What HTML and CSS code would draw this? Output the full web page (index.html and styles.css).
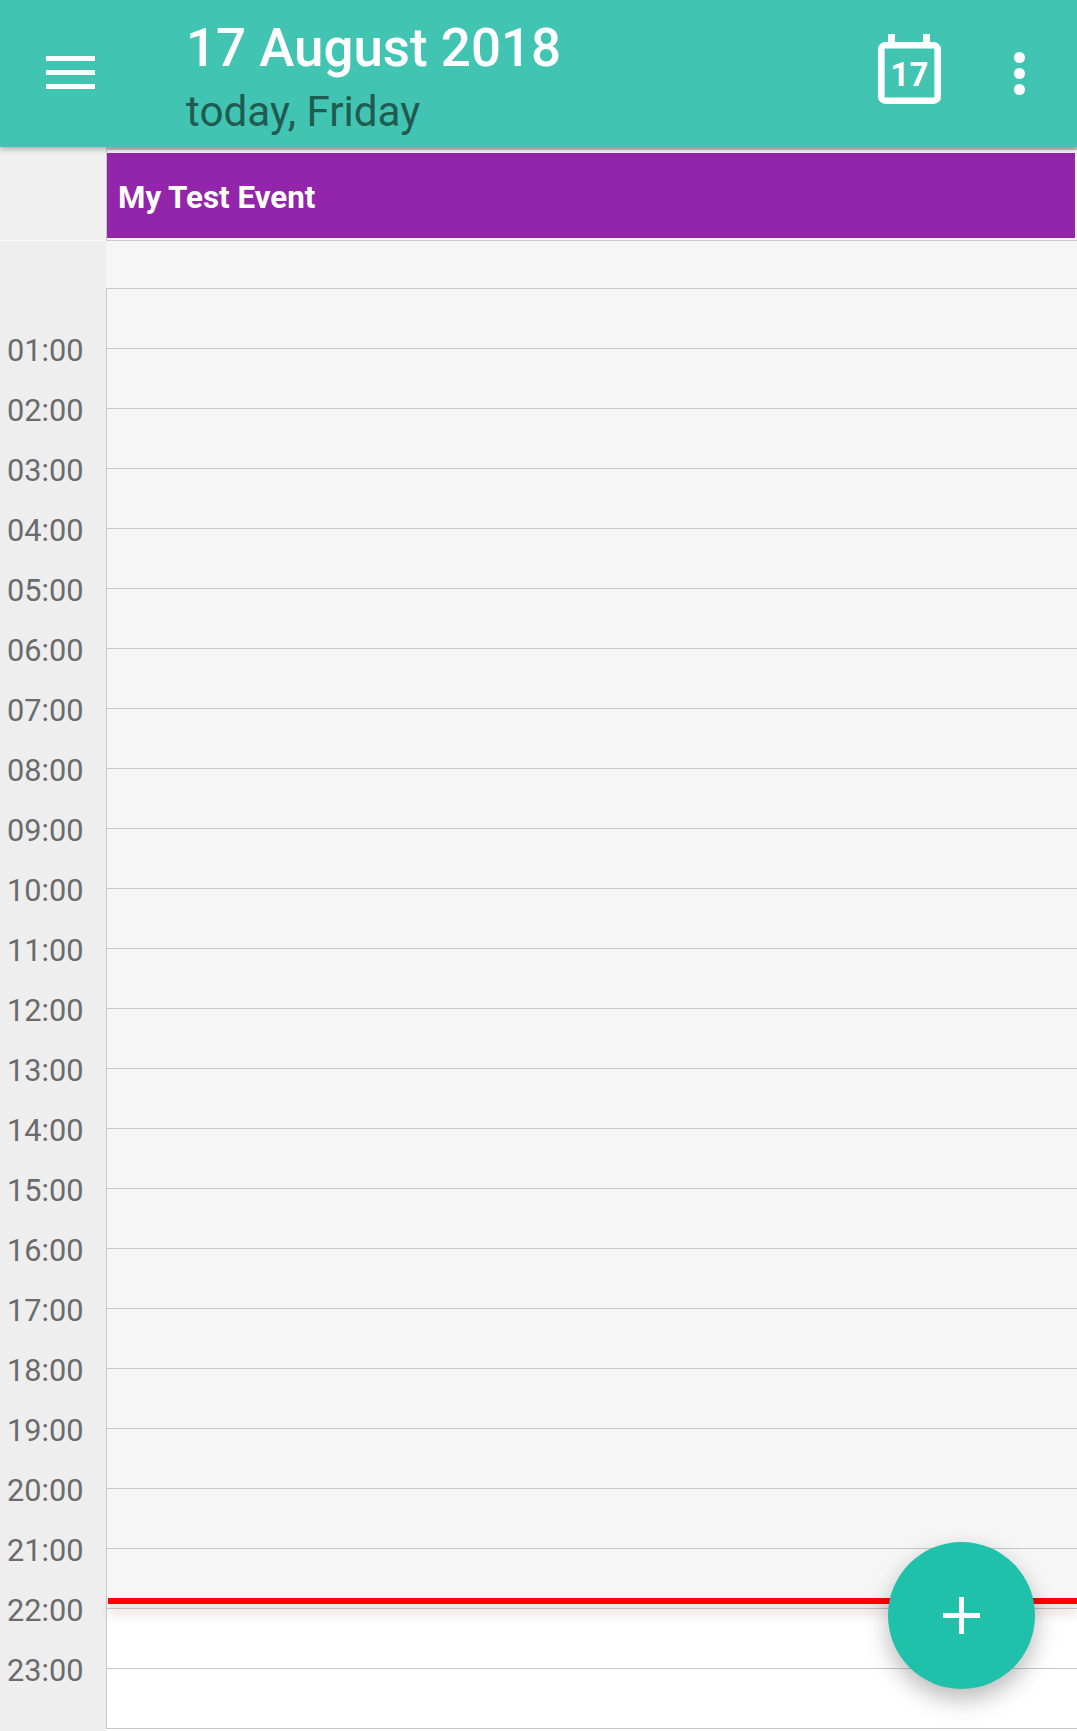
FILE: index.html
```html
<!DOCTYPE html>
<html lang="en">
<head>
  <meta charset="UTF-8" />
  <title>Calendar</title>
  <link rel="stylesheet" href="styles.css">
</head>
<body>
  <div class="toolbar">
    <div class="menu-icon"><span></span><span></span><span></span></div>
    <div class="titles">
      <div class="title">17 August 2018</div>
      <div class="subtitle">today, Friday</div>
    </div>
    <svg class="today-icon" width="63" height="70" viewBox="0 0 63 70">
      <rect x="10" y="0" width="7" height="12" fill="#fff" />
      <rect x="45" y="0" width="7" height="12" fill="#fff" />
      <rect x="3.3" y="11.3" width="56.4" height="55.4" rx="4" fill="none" stroke="#fff" stroke-width="6.6" />
      <text x="31.5" y="52" text-anchor="middle" class="today-num">17</text>
    </svg>
    <div class="more-icon"><span></span><span></span><span></span></div>
  </div>

  <!-- All day -->
  <div class="allday">
    <div class="allday-gutter"></div>
    <div class="allday-events">
      <div class="event">My Test Event</div>
    </div>
  </div>

  <!-- Day -->
  <div class="day">
    <div class="hours">
      <div class="hour">01:00</div>
      <div class="hour">02:00</div>
      <div class="hour">03:00</div>
      <div class="hour">04:00</div>
      <div class="hour">05:00</div>
      <div class="hour">06:00</div>
      <div class="hour">07:00</div>
      <div class="hour">08:00</div>
      <div class="hour">09:00</div>
      <div class="hour">10:00</div>
      <div class="hour">11:00</div>
      <div class="hour">12:00</div>
      <div class="hour">13:00</div>
      <div class="hour">14:00</div>
      <div class="hour">15:00</div>
      <div class="hour">16:00</div>
      <div class="hour">17:00</div>
      <div class="hour">18:00</div>
      <div class="hour">19:00</div>
      <div class="hour">20:00</div>
      <div class="hour">21:00</div>
      <div class="hour">22:00</div>
      <div class="hour">23:00</div>
    </div>
    <div class="slots">
      <div class="slot-top"></div>
      <div class="slot past"></div>
      <div class="slot past"></div>
      <div class="slot past"></div>
      <div class="slot past"></div>
      <div class="slot past"></div>
      <div class="slot past"></div>
      <div class="slot past"></div>
      <div class="slot past"></div>
      <div class="slot past"></div>
      <div class="slot past"></div>
      <div class="slot past"></div>
      <div class="slot past"></div>
      <div class="slot past"></div>
      <div class="slot past"></div>
      <div class="slot past"></div>
      <div class="slot past"></div>
      <div class="slot past"></div>
      <div class="slot past"></div>
      <div class="slot past"></div>
      <div class="slot past"></div>
      <div class="slot past"></div>
      <div class="slot past"></div>
      <div class="slot"></div>
      <div class="slot"></div>
      <div class="now-line"></div>
    </div>
  </div>

  <div class="fab">
    <svg width="37" height="37" viewBox="0 0 37 37">
      <path d="M16 0h5v16h16v5H21v16h-5V21H0v-5h16z" fill="#fff" />
    </svg>
  </div>
</body>
</html>
```

FILE: styles.css
```css
html, body { margin: 0; height: 1731px; overflow: hidden; }
body { position: relative; font-family: Roboto, sans-serif; background: #fff; }

/* Toolbar */
.toolbar {
  position: relative;
  z-index: 2;
  display: flex;
  align-items: flex-start;
  height: 147px;
  background: #42c4b2;
  box-shadow: 0 2px 6px rgba(0, 0, 0, 0.3);
}
.menu-icon {
  display: flex;
  flex-direction: column;
  gap: 9px;
  width: 49px;
  margin: 56px 0 0 46px;
}
.menu-icon span { display: block; height: 5px; background: #fff; }
.titles { margin-left: 91px; width: 692px; }
.title { color: #fff; font-size: 52.9px; font-weight: 500; line-height: 62px; margin-top: 17px; }
.subtitle { color: #1f5b50; font-size: 42.2px; line-height: 48px; margin-top: 9px; }
.today-icon { margin-top: 34px; flex: none; }
.today-num { fill: #fff; font-family: Roboto, sans-serif; font-size: 33px; font-weight: 700; }
.more-icon {
  display: flex;
  flex-direction: column;
  gap: 5px;
  margin: 52px 0 0 73px;
}
.more-icon span { display: block; width: 11px; height: 11px; border-radius: 50%; background: #fff; }

/* All day row */
.allday { display: flex; height: 94px; box-sizing: border-box; }
.allday-gutter {
  width: 106px;
  background: #f0f0f0;
  border-bottom: 1px solid #fafafa;
}
.allday-events {
  flex: 1;
  box-sizing: border-box;
  padding: 3px 2px 2px 0;
  background: #f6f6f6;
  border-top: 3px solid #c8c8c8;
  border-bottom: 1px solid #c8c8c8;
  border-left: 1px solid #c8c8c8;
}
.event {
  display: flex;
  align-items: center;
  box-sizing: border-box;
  height: 85px;
  padding: 4px 0 0 11px;
  background: #9225aa;
  color: #fff;
  font-size: 31.3px;
  font-weight: 700;
}

/* Day */
.day { display: flex; height: 1490px; background: #eee; }
.hours {
  width: 106px;
  flex: none;
  padding-top: 80px;
  box-sizing: border-box;
}
.hour {
  height: 60px;
  line-height: 60px;
  padding-left: 7px;
  font-size: 30.7px;
  color: #6b6b6b;
}
.slots { position: relative; flex: 1; background: #fff; }
.slot-top { height: 47px; background: #f6f6f6; border-bottom: 1px solid #c8c8c8; }
.slot {
  box-sizing: border-box;
  height: 60px;
  border-left: 1px solid #c8c8c8;
  border-bottom: 1px solid #c8c8c8;
}
.slot.past { background: #f6f6f6; }
.now-line {
  position: absolute;
  left: 2px;
  right: 0;
  top: 1357px;
  height: 6px;
  background: #f00;
  box-shadow: 0 9px 11px rgba(120, 30, 30, 0.2);
}

/* Add button */
.fab {
  position: absolute;
  left: 888px;
  top: 1542px;
  z-index: 3;
  display: flex;
  align-items: center;
  justify-content: center;
  width: 147px;
  height: 147px;
  border-radius: 50%;
  background: #1fc1ab;
  box-shadow: 0 10px 24px rgba(0, 0, 0, 0.28);
}
```
